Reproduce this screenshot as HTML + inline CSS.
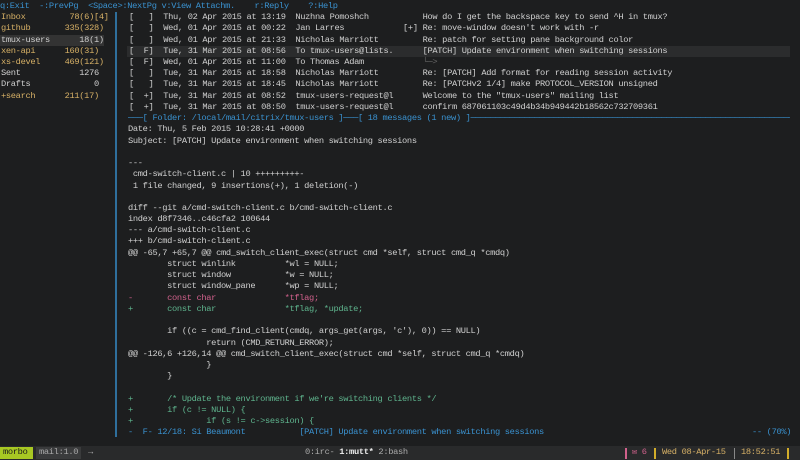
<!DOCTYPE html>
<html><head><meta charset="utf-8"><style>
html,body{margin:0;padding:0;background:#1d1e1f;width:800px;height:460px;overflow:hidden}
body{position:relative;font-family:"Liberation Mono",monospace;font-size:8.7px;letter-spacing:-0.32px;color:#d0d0d0}
.r{position:absolute;white-space:pre;height:11.25px;line-height:11.25px}
.b{color:#3a92d0}.y{color:#d6b066}.w{color:#d0d0d0}.p{color:#d1618c}.g{color:#5fb58e}
</style></head><body>
<div class="r b" style="left:0;top:1px">q:Exit  -:PrevPg  &lt;Space&gt;:NextPg v:View Attachm.    r:Reply    ?:Help</div>
<div style="position:absolute;left:0;top:35px;width:104px;height:11px;background:#333"></div>
<div class="r y" style="left:1px;top:12px">Inbox         78(6)[4]</div>
<div class="r y" style="left:1px;top:23px">github       335(328)</div>
<div class="r w" style="left:1px;top:35px">tmux-users      18(1)</div>
<div class="r y" style="left:1px;top:46px">xen-api      160(31)</div>
<div class="r y" style="left:1px;top:57px">xs-devel     469(121)</div>
<div class="r w" style="left:1px;top:68px">Sent            1276</div>
<div class="r w" style="left:1px;top:79px">Drafts             0</div>
<div class="r y" style="left:1px;top:91px">+search      211(17)</div>
<div style="position:absolute;left:115px;top:12px;width:2px;height:425px;background:#2f6f9c"></div>
<div style="position:absolute;left:127px;top:46px;width:663px;height:11px;background:#2b2c2d"></div>
<div class="r" style="left:129px;top:12px">[   ]  Thu, 02 Apr 2015 at 13:19  Nuzhna Pomoshch           How do I get the backspace key to send ^H in tmux?</div>
<div class="r" style="left:129px;top:23px">[   ]  Wed, 01 Apr 2015 at 00:22  Jan Larres            [+] Re: move-window doesn't work with -r</div>
<div class="r" style="left:129px;top:35px">[   ]  Wed, 01 Apr 2015 at 21:33  Nicholas Marriott         Re: patch for setting pane background color</div>
<div class="r" style="left:129px;top:46px">[  F]  Tue, 31 Mar 2015 at 08:56  To tmux-users@lists.      [PATCH] Update environment when switching sessions</div>
<div class="r" style="left:129px;top:57px">[  F]  Wed, 01 Apr 2015 at 11:00  To Thomas Adam            <span style="color:#666">└─&gt;</span></div>
<div class="r" style="left:129px;top:68px">[   ]  Tue, 31 Mar 2015 at 18:58  Nicholas Marriott         Re: [PATCH] Add format for reading session activity</div>
<div class="r" style="left:129px;top:79px">[   ]  Tue, 31 Mar 2015 at 18:45  Nicholas Marriott         Re: [PATCHv2 1/4] make PROTOCOL_VERSION unsigned</div>
<div class="r" style="left:129px;top:91px">[  +]  Tue, 31 Mar 2015 at 08:52  tmux-users-request@l      Welcome to the "tmux-users" mailing list</div>
<div class="r" style="left:129px;top:102px">[  +]  Tue, 31 Mar 2015 at 08:50  tmux-users-request@l      confirm 687061103c49d4b34b949442b18562c732709361</div>
<div class="r b" style="left:128px;top:113px;width:662px;overflow:hidden">───[ Folder: /local/mail/citrix/tmux-users ]───[ 18 messages (1 new) ]───────────────────────────────────────────────────────────────────────────────</div>
<div class="r" style="left:128px;top:124px">Date: Thu, 5 Feb 2015 10:28:41 +0000</div>
<div class="r" style="left:128px;top:136px">Subject: [PATCH] Update environment when switching sessions</div>
<div class="r" style="left:128px;top:158px">---</div>
<div class="r" style="left:128px;top:169px"> cmd-switch-client.c | 10 +++++++++-</div>
<div class="r" style="left:128px;top:181px"> 1 file changed, 9 insertions(+), 1 deletion(-)</div>
<div class="r" style="left:128px;top:203px">diff --git a/cmd-switch-client.c b/cmd-switch-client.c</div>
<div class="r" style="left:128px;top:214px">index d8f7346..c46cfa2 100644</div>
<div class="r" style="left:128px;top:225px">--- a/cmd-switch-client.c</div>
<div class="r" style="left:128px;top:236px">+++ b/cmd-switch-client.c</div>
<div class="r" style="left:128px;top:248px">@@ -65,7 +65,7 @@ cmd_switch_client_exec(struct cmd *self, struct cmd_q *cmdq)</div>
<div class="r" style="left:128px;top:259px">        struct winlink          *wl = NULL;</div>
<div class="r" style="left:128px;top:270px">        struct window           *w = NULL;</div>
<div class="r" style="left:128px;top:281px">        struct window_pane      *wp = NULL;</div>
<div class="r p" style="left:128px;top:293px">-       const char              *tflag;</div>
<div class="r g" style="left:128px;top:304px">+       const char              *tflag, *update;</div>
<div class="r" style="left:128px;top:326px">        if ((c = cmd_find_client(cmdq, args_get(args, 'c'), 0)) == NULL)</div>
<div class="r" style="left:128px;top:338px">                return (CMD_RETURN_ERROR);</div>
<div class="r" style="left:128px;top:349px">@@ -126,6 +126,14 @@ cmd_switch_client_exec(struct cmd *self, struct cmd_q *cmdq)</div>
<div class="r" style="left:128px;top:360px">                }</div>
<div class="r" style="left:128px;top:371px">        }</div>
<div class="r g" style="left:128px;top:394px">+       /* Update the environment if we're switching clients */</div>
<div class="r g" style="left:128px;top:405px">+       if (c != NULL) {</div>
<div class="r g" style="left:128px;top:416px">+               if (s != c-&gt;session) {</div>
<div class="r b" style="left:128px;top:427px">-  F- 12/18: Si Beaumont           [PATCH] Update environment when switching sessions</div>
<div class="r b" style="left:752px;top:427px">-- (70%)</div>
<div style="position:absolute;left:0;top:446px;width:800px;height:14px;background:#292a2b"></div>
<div style="position:absolute;left:0;top:447px;width:33px;height:12px;background:#a8c823"></div>
<div class="r" style="left:3px;top:447px;color:#1a1a1a">morbo</div>
<div style="position:absolute;left:36px;top:447px;width:45px;height:12px;background:#3a3b3c"></div>
<div class="r" style="left:39px;top:447px;color:#aaa">mail:1.0</div>
<div class="r" style="left:88px;top:447px;color:#aaa">→</div>
<div class="r" style="left:305px;top:447px;color:#aaa">0:irc- <b style="color:#eee">1:mutt*</b> 2:bash</div>
<div style="position:absolute;left:625px;top:448px;width:2px;height:11px;background:#d1618c"></div>
<div class="r p" style="left:632px;top:447px">✉ 6</div>
<div style="position:absolute;left:654px;top:448px;width:2px;height:11px;background:#d2ad2a"></div>
<div class="r y" style="left:662px;top:447px">Wed 08-Apr-15</div>
<div style="position:absolute;left:734px;top:448px;width:1px;height:11px;background:#888"></div>
<div class="r y" style="left:741px;top:447px">18:52:51</div>
<div style="position:absolute;left:787px;top:448px;width:2px;height:11px;background:#d2ad2a"></div>
</body></html>
